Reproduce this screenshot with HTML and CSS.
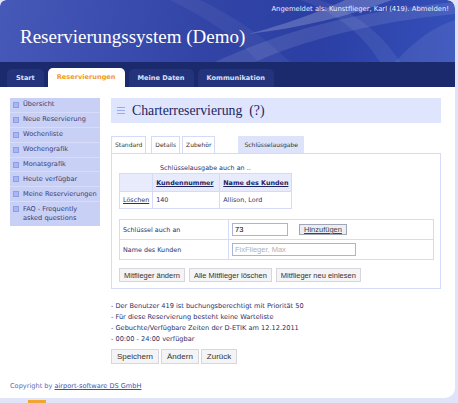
FILE: index.html
```html
<!DOCTYPE html>
<html lang="de">
<head>
    <meta charset="UTF-8">
    <title>Reservierungssystem (Demo)</title>
    <link rel="stylesheet" href="styles.css">
</head>
<body>
    <div class="page">
        <div class="header">
            <svg class="swoosh" width="455" height="62" viewBox="0 0 455 62">
                <path d="M215 62 C 280 32, 350 12, 455 2 L 455 14 C 370 22, 300 42, 255 62 Z" fill="rgba(255,255,255,0.10)"/>
                <path d="M248 34 C 280 26, 320 12, 345 0 L 392 0 C 350 16, 300 28, 248 34 Z" fill="rgba(255,255,255,0.20)"/>
                <path d="M300 0 C 330 10, 360 30, 380 62 L 400 62 C 380 30, 350 10, 320 0 Z" fill="rgba(255,255,255,0.07)"/>
                <path d="M395 62 C 415 40, 435 26, 455 20 L 455 62 Z" fill="rgba(255,255,255,0.08)"/>
                <path d="M170 0 C 210 20, 240 40, 258 62 L 290 62 C 262 35, 232 15, 200 0 Z" fill="rgba(255,255,255,0.05)"/>
            </svg>
            <div class="user-info">Angemeldet als: Kunstflieger, Karl (419). Abmelden!</div>
            <div class="site-title">Reservierungssystem (Demo)</div>
        </div>
        <div class="nav">
            <a class="nav-tab">Start</a>
            <a class="nav-tab active">Reservierungen</a>
            <a class="nav-tab">Meine Daten</a>
            <a class="nav-tab">Kommunikation</a>
        </div>

        <div class="main">
            <ul class="sidebar">
                <li>Übersicht</li>
                <li>Neue Reservierung</li>
                <li>Wochenliste</li>
                <li>Wochengrafik</li>
                <li>Monatsgrafik</li>
                <li>Heute verfügbar</li>
                <li>Meine Reservierungen</li>
                <li>FAQ - Frequently asked questions</li>
            </ul>

            <div class="content">
                <div class="page-heading">
                    <span class="menu-icon"><i></i><i></i><i></i></span>
                    <h1>Charterreservierung &nbsp;(?)</h1>
                </div>

                <div class="tabs">
                    <span class="tab">Standard</span>
                    <span class="tab details">Details</span>
                    <span class="tab">Zubehör</span>
                    <span class="tab current">Schlüsselausgabe</span>
                </div>
                <div class="panel">
                    <div class="caption">Schlüsselausgabe auch an ..</div>
                    <table class="key-table">
                        <tr>
                            <th class="blank"></th>
                            <th><a>Kundennummer</a></th>
                            <th><a>Name des Kunden</a></th>
                        </tr>
                        <tr>
                            <td><a>Löschen</a></td>
                            <td>140</td>
                            <td>Allison, Lord</td>
                        </tr>
                    </table>

                    <table class="form-table">
                        <tr>
                            <td class="label">Schlüssel auch an</td>
                            <td><input class="field short" value="73"><button class="btn add">Hinzufügen</button></td>
                        </tr>
                        <tr>
                            <td class="label">Name des Kunden</td>
                            <td><input class="field long" placeholder="FixFlieger, Max"></td>
                        </tr>
                    </table>

                    <div class="actions">
                        <button class="btn">Mitflieger ändern</button>
                        <button class="btn">Alle Mitflieger löschen</button>
                        <button class="btn">Mitflieger neu einlesen</button>
                    </div>
                </div>

                <ul class="notes">
                    <li>- Der Benutzer 419 ist buchungsberechtigt mit Priorität 50</li>
                    <li>- Für diese Reservierung besteht keine Warteliste</li>
                    <li>- Gebuchte/Verfügbare Zeiten der D-ETIK am 12.12.2011</li>
                    <li>- 00:00 - 24:00 verfügbar</li>
                </ul>

                <div class="actions bottom">
                    <button class="btn big">Speichern</button>
                    <button class="btn big">Ändern</button>
                    <button class="btn big">Zurück</button>
                </div>
            </div>
        </div>

        <div class="footer">Copyright by <a>airport-software DS GmbH</a></div>
    </div>
    <div class="marker"></div>
</body>
</html>
```

FILE: styles.css
```css
body {
    margin: 0;
    background: #dfe4f8;
    font-family: "DejaVu Sans", Verdana, sans-serif;
    font-size: 7px;
    color: #2c2f66;
    width: 458px;
    height: 403px;
    overflow: hidden;
}

.page {
    width: 455px;
    height: 398px;
    background: #fff;
    border-radius: 6px 8px 10px 0;
    overflow: hidden;
    display: flex;
    flex-direction: column;
}

.header {
    position: relative;
    height: 62px;
    background: linear-gradient(100deg, #4658b8 0%, #3244a6 45%, #2b3fa4 70%, #3550bb 100%);
    color: #fff;
    border-radius: 6px 8px 0 0;
}

.swoosh {
    position: absolute;
    left: 0;
    top: 0;
}

.user-info {
    position: relative;
    text-align: right;
    padding: 5px 6px 0 0;
    font-size: 6.8px;
    color: #e8ecff;
}

.site-title {
    position: relative;
    font-family: "Liberation Serif", Georgia, serif;
    font-size: 19px;
    padding: 13px 0 0 20px;
}

.nav {
    height: 25px;
    background: #1b2a6d;
    display: flex;
    align-items: flex-end;
    padding-left: 7px;
    gap: 4px;
}

.nav-tab {
    height: 18px;
    line-height: 19px;
    padding: 0 9px;
    background: #23347c;
    color: #dde2f8;
    font-weight: bold;
    font-size: 6.6px;
    border-radius: 5px 5px 0 0;
}

.nav-tab.active {
    background: #fff;
    color: #f39a1c;
    height: 19px;
}

.main {
    display: flex;
    padding-top: 11px;
    flex: 1;
}

.sidebar {
    list-style: none;
    margin: 0 11px 0 10px;
    padding: 0;
    width: 90px;
    background: #c8d0f6;
    align-self: flex-start;
}

.sidebar li {
    position: relative;
    padding: 2.3px 2px 2.2px 13px;
    line-height: 9.4px;
    border-bottom: 1px solid #d6dcf9;
    color: #3a3d6e;
    font-size: 6.6px;
}

.sidebar li:last-child {
    border-bottom: none;
    padding-bottom: 3px;
}

.sidebar li::before {
    content: "";
    position: absolute;
    left: 3px;
    top: 4px;
    width: 4px;
    height: 4px;
    background: #a9b6f3;
    border: 0.5px solid #8d9de8;
}

.content {
    width: 330px;
}

.page-heading {
    display: flex;
    align-items: center;
    height: 25px;
    background: #dfe5fc;
    padding-left: 6px;
}

.menu-icon {
    display: flex;
    flex-direction: column;
    gap: 1.5px;
    margin-right: 7px;
}

.menu-icon i {
    display: block;
    width: 8px;
    height: 1.5px;
    background: #9aa8ee;
}

.page-heading h1 {
    margin: 0;
    font-family: "Liberation Serif", Georgia, serif;
    font-weight: normal;
    font-size: 13.8px;
    color: #1c2463;
}

.tabs {
    display: flex;
    margin-top: 13px;
    gap: 2px;
}

.tab {
    height: 16px;
    line-height: 16px;
    padding: 0 3px;
    border: 1px solid #d5dbf7;
    border-bottom: none;
    font-size: 6px;
    color: #333;
}

.tab.details {
    margin-left: 3px;
}

.tab.current {
    margin-left: 21px;
    background: #dde3fb;
    border-color: #dde3fb;
    padding: 0 5px;
}

.panel {
    border: 1px solid #d5dbf7;
    height: 134px;
    padding: 0 6px 0 7px;
}

.caption {
    padding: 10px 0 0 41px;
    height: 9px;
    font-size: 6.4px;
}

table {
    border-collapse: collapse;
}

.key-table td, .key-table th {
    border: 1px solid #d5dbf7;
    height: 16px;
    padding: 0 3px;
    text-align: left;
    font-size: 6.4px;
}

.key-table th {
    background: #e7ebfc;
    height: 17px;
}

.key-table th a {
    color: #1c2463;
    text-decoration: underline;
    font-weight: bold;
}

.key-table td a {
    color: #2c2f66;
    text-decoration: underline;
}

.key-table td:nth-child(2) {
    width: 60px;
}

.form-table {
    margin-top: 10px;
    width: 100%;
}

.form-table td {
    border: 1px solid #d5dbf7;
    height: 19px;
    padding: 0 3px;
    font-size: 6.4px;
}

.form-table td.label {
    width: 102px;
}

.field {
    box-sizing: border-box;
    height: 13px;
    border: 1px solid #aab4d8;
    font-family: "Liberation Sans", Arial, sans-serif;
    font-size: 7.5px;
    padding: 0 2px;
    vertical-align: middle;
}

.field.short {
    width: 56px;
}

.field.long {
    width: 124px;
}

.field::placeholder {
    color: #b0b0b8;
}

.btn {
    height: 13px;
    padding: 0 4px;
    border: 1px solid #d6d6dc;
    background: #f4f4f6;
    font-family: "Liberation Sans", Arial, sans-serif;
    font-size: 7.5px;
    color: #333;
    vertical-align: middle;
}

.btn.add {
    margin-left: 11px;
    height: 11px;
    line-height: 9px;
    border: 1px solid #a0a6b8;
    background: #eceef2;
    text-decoration: underline;
    color: #444;
}

.actions {
    display: flex;
    gap: 4px;
    margin-top: 8px;
}

.actions .btn {
    height: 14px;
}

.notes {
    list-style: none;
    margin: 12px 0 0;
    padding: 0;
    line-height: 11px;
    font-size: 6.6px;
    color: #2c2f66;
}

.actions.bottom {
    margin-top: 4px;
    gap: 2px;
}

.btn.big {
    height: 15px;
    font-size: 8px;
    padding: 0 5px;
}

.footer {
    padding: 0 0 8px 10px;
    font-size: 6.6px;
    color: #5a68b8;
}

.footer a {
    color: #3d4fb0;
    text-decoration: underline;
}

.marker {
    width: 18px;
    height: 5px;
    margin-top: 2px;
    margin-left: 28px;
    background: #f2a530;
}
```
